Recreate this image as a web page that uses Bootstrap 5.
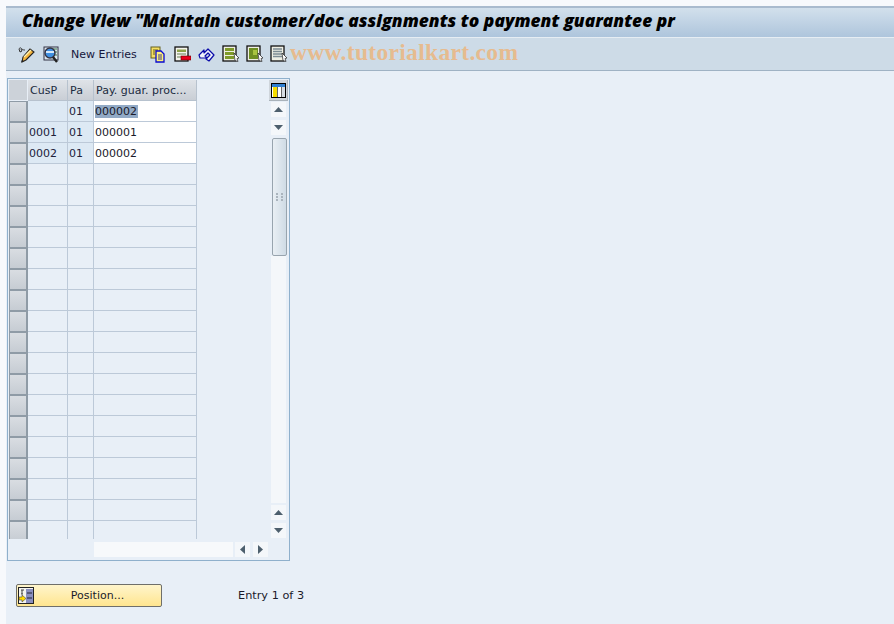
<!DOCTYPE html>
<html lang="en">
<head>
<meta charset="utf-8">
<title>Change View</title>
<link rel="stylesheet" href="https://cdn.jsdelivr.net/npm/bootstrap@5.3.0/dist/css/bootstrap.min.css">
<style>
html,body{height:100%;}
body{background:#f7f9fc;font-family:"DejaVu Sans",sans-serif;font-size:11px;color:#1a1a2a;overflow:hidden;}
.shell{width:894px;height:624px;padding:6px 0 0 6px;}
.inner{height:618px;background:#e8eff7;position:relative;}
.titlebar{height:32px;border-top:2px solid #a9bbce;background:linear-gradient(#d2e0ec,#aec5dc);padding-left:16px;font:italic 800 17.4px/24px "Open Sans",sans-serif;color:#000;white-space:nowrap;overflow:hidden;border-bottom:1px solid #e6edf3;}
.toolbar{height:33px;background:#cddbe7;border-bottom:1px solid #9fb2c4;padding-left:12px;position:relative;}
.tbi{width:24px;flex:none;display:block;}
.tbi svg{display:block;}
.newent{font-size:11px;color:#16163c;margin:0 12px 0 5px;line-height:1;width:67px;white-space:nowrap;}
.wmark{position:absolute;left:284px;top:0;font:700 23.5px/28px "Liberation Serif",serif;color:#e6bb8f;letter-spacing:.32px;white-space:nowrap;}
.tblbox{margin:7px 0 0 1px;width:283px;height:483px;border:1px solid #8fb0cc;padding:1px 1px 0 1px;}
.gridwrap{height:459px;overflow:hidden;flex:none;}
.gridtb{border-collapse:separate;border-spacing:0;table-layout:fixed;width:188px;}
.gridtb th,.gridtb td{padding:1px 0 0 2px;height:21px;font-weight:400;font-size:11px;line-height:19px;border-right:1px solid #bcc9d8;border-bottom:1px solid #bcc9d8;white-space:nowrap;overflow:hidden;font-family:"DejaVu Sans",sans-serif;}
.gridtb th{background:linear-gradient(#dfe3e8,#c9ced5);border-color:#b7c2ce;color:#1b2b40;padding-top:0;}
.gridtb th.corner{background:#ccd2d9;padding:0;border-color:#e8eff7;border-left:0;}
.gridtb td.sel{padding:0;border:1px solid #8f9ba6;border-width:1px 2px 1px 1px;background:linear-gradient(#d9dde2,#c6ccd3);}
.gridtb td.key{background:#dde9f4;color:#21213a;padding-left:1px;}
.gridtb td.inp{background:#fff;padding-left:1px;}
.gridtb td.empty{background:#e8eff7;}
.hl{background:#92aac6;display:inline-block;line-height:13px;padding-right:1px;}
.vbar{width:16px;margin-left:74px;height:458px;display:flex;flex-direction:column;align-items:stretch;}
.cfgbtn{width:19px;height:21px;margin:0 0 1px -2px;background:#cfd5db;display:flex;align-items:center;justify-content:center;border-right:1px solid #a9b2ba;border-bottom:1px solid #a9b2ba;}
.sbtn{height:15px;width:15px;background:#f4f7fa;display:flex;align-items:center;justify-content:center;flex:none;}
.sbtn+.sbtn{margin-top:3px;}
.thumb{height:118px;width:15px;margin:3px 0 0 1px;border:1px solid #98a4ae;border-radius:2px;background:linear-gradient(90deg,#e9eff4,#cfdbe5);display:flex;align-items:center;justify-content:center;flex:none;}
.track{flex:1;width:15px;background:#f4f7fa;margin-bottom:2px;margin-top:0;}
.hrow{display:flex;align-items:center;margin:3px 0 0 85px;gap:3px;}
.htrack{width:139px;height:15px;background:#f7f9fb;margin-right:-1px;}
.hrow .sbtn+.sbtn{margin-top:0;}
.actions{padding:23px 0 0 10px;display:flex;align-items:center;}
.posbtn{width:146px;height:23px;border:1px solid #6f6f6a;border-radius:2px;background:linear-gradient(#fff5cc,#ffe58f);padding:0;display:flex;align-items:center;position:relative;color:#1a1a2a;font-size:11px;line-height:1;}
.posbtn svg{margin-left:1px;flex:none;}
.posbtn span{flex:1;text-align:center;padding-right:0;}
.entry{margin-left:76px;padding-top:1px;font-size:11.3px;}
</style>
</head>
<body>
<div class="shell">
<div class="inner">
  <div class="titlebar">Change View "Maintain customer/doc assignments to payment guarantee pr</div>
  <div class="toolbar d-flex align-items-center">
    <span class="tbi"><svg width="17" height="17" viewBox="0 0 17 17"><path d="M1 3c1-2 2-1 3 0s2 1 3 1M1 3l1 3 2-1-1-2" fill="none" stroke="#333"/><path d="M5 11l7-8 4 3-8 8-4 2z" fill="#f4b43c" stroke="#222" stroke-width="1.100"/><path d="M6 11l7-7" stroke="#fff2b0" stroke-width="1.200"/><path d="M3 16l1-2 2 1z" fill="#222"/></svg></span>
    <span class="tbi"><svg width="17" height="17" viewBox="0 0 17 17"><rect x="2" y="1" width="14" height="13" fill="#dce6ee" stroke="#334"/><path d="M11 3h4M12 6h3M12 9h3" stroke="#3b7a4a"/><circle cx="8" cy="7" r="5" fill="#3f8fe0" stroke="#334" stroke-width="1.400"/><path d="M4 6h8" stroke="#d5e8fa" stroke-width="2"/><path d="M11 11l4 5" stroke="#222" stroke-width="2.400"/></svg></span>
    <span class="newent">New Entries</span>
    <span class="tbi"><svg width="16" height="17" viewBox="0 0 16 17"><rect x="1" y="1" width="9" height="11" fill="#f5de62" stroke="#66611e"/><path d="M3 4h5M3 6h2M3 8h2" stroke="#66611e"/><path d="M6 5h5l3 3v8H6z" fill="#fff27a" stroke="#0a0ad0" stroke-width="1.300"/><path d="M8 9h4M8 11h4M8 13h4" stroke="#3a3a90"/></svg></span>
    <span class="tbi"><svg width="17" height="17" viewBox="0 0 17 17"><rect x="1" y="1" width="13" height="14" fill="#f4f4ee" stroke="#111" stroke-width="1.300"/><rect x="3" y="3.500" width="9" height="2.500" fill="#8ea24a"/><rect x="3" y="7" width="9" height="2" fill="#adb9a0"/><rect x="3" y="10" width="5" height="2" fill="#adb9a0"/><rect x="7" y="10" width="10" height="4" fill="#e8001c" stroke="#600" stroke-width=".6"/></svg></span>
    <span class="tbi"><svg width="17" height="17" viewBox="0 0 17 17"><path d="M1 9l5-5v3l4-4 6 6-5 6-3-2 4-4-2-2-3 3 2 2H2z" fill="#f2f5fb" stroke="#0b0ba8" stroke-width="1.200" stroke-linejoin="round"/></svg></span>
    <span class="tbi"><svg width="18" height="18" viewBox="0 0 18 18"><rect x="1" y="1" width="13" height="15" fill="#efefe4" stroke="#111" stroke-width="1.300"/><rect x="3" y="3" width="9" height="3" fill="#7f9a2a"/><rect x="3" y="7" width="9" height="3" fill="#7f9a2a"/><rect x="3" y="11" width="9" height="3" fill="#7f9a2a"/><path d="M12 8l5 5-2 .5 1 3-3-1z" fill="#fff" stroke="#333" stroke-width=".8"/></svg></span>
    <span class="tbi"><svg width="18" height="18" viewBox="0 0 18 18"><rect x="1" y="1" width="13" height="15" fill="#efefe4" stroke="#111" stroke-width="1.300"/><rect x="3" y="3" width="9" height="11" fill="#6f8f22"/><rect x="7" y="5" width="4" height="5" fill="#a9c43f"/><path d="M12 8l5 5-2 .5 1 3-3-1z" fill="#fff" stroke="#333" stroke-width=".8"/></svg></span>
    <span class="tbi"><svg width="18" height="18" viewBox="0 0 18 18"><rect x="1" y="1" width="13" height="15" fill="#efefe4" stroke="#111" stroke-width="1.300"/><path d="M3 4h9M3 6.500h9M3 9h9M3 11.500h9" stroke="#7d8c93" stroke-width="1.300"/><path d="M12 8l5 5-2 .5 1 3-3-1z" fill="#fff" stroke="#333" stroke-width=".8"/></svg></span>
    <div class="wmark">www.tutorialkart.com</div>
  </div>

  <div class="tblbox d-flex flex-column">
    <div class="d-flex gridwrap">
      <table class="gridtb">
        <colgroup><col style="width:19px"><col style="width:40px"><col style="width:26px"><col style="width:103px"></colgroup>
        <thead><tr><th class="corner"></th><th>CusP</th><th>Pa</th><th>Pay. guar. proc...</th></tr></thead>
        <tbody id="rows"></tbody>
      </table>
      <div class="vbar">
        <div class="cfgbtn"><svg width="15" height="15" viewBox="0 0 15 15"><rect x=".5" y=".5" width="14" height="14" fill="#fff" stroke="#000"/><rect x="1" y="1" width="13" height="3" fill="#2f7fd0"/><rect x="2" y="4" width="4" height="10" fill="#f6dd00"/><rect x="6" y="4" width="1" height="10" fill="#000" opacity=".6"/><rect x="10" y="4" width="1" height="10" fill="#000" opacity=".6"/><rect x="11" y="4" width="3" height="10" fill="#d6dce2"/></svg></div>
        <div class="sbtn"><svg width="9" height="5" viewBox="0 0 9 5"><path d="M4.500 0L9 5H0z" fill="#4d5f6d"/></svg></div>
        <div class="sbtn"><svg width="9" height="5" viewBox="0 0 9 5"><path d="M0 0h9L4.500 5z" fill="#4d5f6d"/></svg></div>
        <div class="thumb"><svg width="7" height="9" viewBox="0 0 7 9"><path d="M0 1h2M5 1h2M0 4h2M5 4h2M0 7h2M5 7h2" stroke="#aab4bd" stroke-width="2"/></svg></div>
        <div class="track"></div>
        <div class="sbtn"><svg width="9" height="5" viewBox="0 0 9 5"><path d="M4.500 0L9 5H0z" fill="#4d5f6d"/></svg></div>
        <div class="sbtn"><svg width="9" height="5" viewBox="0 0 9 5"><path d="M0 0h9L4.500 5z" fill="#4d5f6d"/></svg></div>
      </div>
    </div>
    <div class="hrow">
      <div class="htrack"></div>
      <div class="sbtn"><svg width="5" height="9" viewBox="0 0 5 9"><path d="M5 0v9L0 4.500z" fill="#4d5f6d"/></svg></div>
      <div class="sbtn"><svg width="5" height="9" viewBox="0 0 5 9"><path d="M0 0v9l5-4.500z" fill="#4d5f6d"/></svg></div>
    </div>
  </div>

  <div class="actions">
    <button type="button" class="posbtn">
      <svg width="16" height="17" viewBox="0 0 16 17"><rect x=".5" y=".5" width="15" height="16" fill="#f4f4f0" stroke="#222"/><rect x="8" y="2" width="7" height="14" fill="#8a8fc0"/><path d="M9 6h5M9 11h5" stroke="#223"/><path d="M3 3h3M4 3v4M3 7h2" stroke="#444" fill="none"/><path d="M1 10h3V8l4 3.500-4 3.500v-2H1z" fill="#ffd800" stroke="#444" stroke-width=".6"/></svg>
      <span>Position...</span>
    </button>
    <span class="entry">Entry 1 of 3</span>
  </div>
</div>
</div>
<script>
var data=[["","01","000002"],["0001","01","000001"],["0002","01","000002"]];
var h="";
for(var i=0;i<21;i++){
  var d=data[i];
  if(d){
    var v=i===0?'<span class="hl">'+d[2]+'</span>':d[2];
    h+='<tr><td class="sel"></td><td class="key">'+d[0]+'</td><td class="key">'+d[1]+'</td><td class="inp">'+v+'</td></tr>';
  }else{
    h+='<tr><td class="sel"></td><td class="empty"></td><td class="empty"></td><td class="empty"></td></tr>';
  }
}
document.getElementById("rows").innerHTML=h;
</script>
<script src="https://cdn.jsdelivr.net/npm/bootstrap@5.3.0/dist/js/bootstrap.bundle.min.js"></script>
</body>
</html>
